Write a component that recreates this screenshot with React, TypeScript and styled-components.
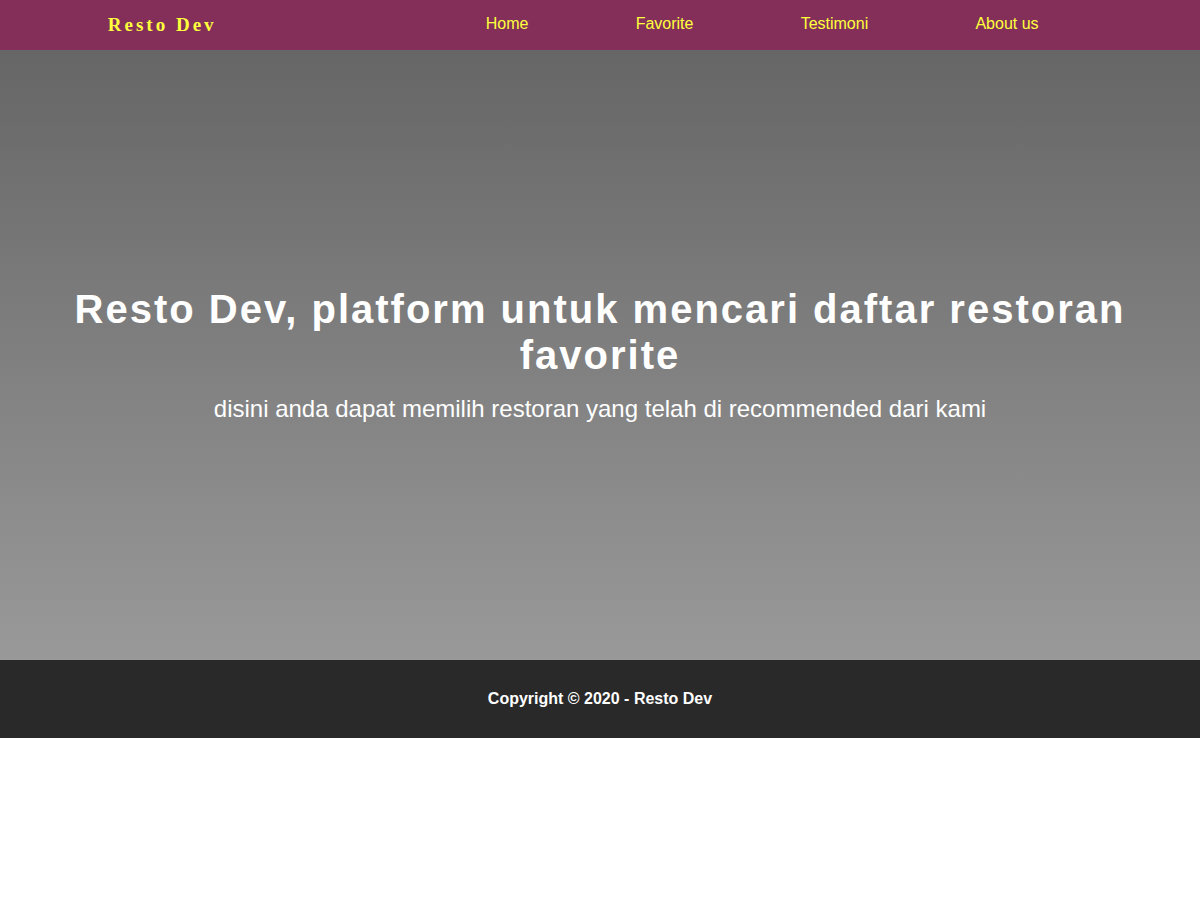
import React from "react";
import styled, { createGlobalStyle } from "styled-components";

const GlobalStyle = createGlobalStyle`
  * { box-sizing: border-box; margin: 0; padding: 0; }
  body { background: #fff; font-family: "Liberation Sans", Arial, sans-serif; }
`;

const NavBar = styled.nav`
  display: flex;
  justify-content: space-around;
  align-items: center;
  height: 50px;
  background: #832f5a;
`;

const Logo = styled.h1`
  color: #ffff3c;
  font-family: "Liberation Serif", "Times New Roman", serif;
  font-size: 19px;
  font-weight: bold;
  letter-spacing: 3px;
  line-height: 24px;
`;

const NavLinks = styled.ul`
  display: flex;
  justify-content: space-around;
  width: 55%;
  list-style: none;
`;

const NavLink = styled.a`
  display: block;
  color: #ffff3c;
  font-size: 16px;
  line-height: 18px;
  padding-bottom: 2px;
  text-decoration: none;
`;

const Hero = styled.header`
  display: flex;
  flex-direction: column;
  align-items: center;
  justify-content: center;
  min-height: 610px;
  color: #fff;
  text-align: center;
  background: linear-gradient(#666, #999);
`;

const HeroTitle = styled.h2`
  font-size: 40px;
  line-height: 46px;
  letter-spacing: 2px;
  padding: 0 64px;
`;

const HeroText = styled.p`
  margin-top: 16px;
  font-size: 24px;
  line-height: 30px;
`;

const Footer = styled.footer`
  padding: 30px 16px;
  background: #292929;
  color: #fff;
  font-size: 16px;
  font-weight: bold;
  line-height: 18px;
  text-align: center;
`;

const links = [
  { label: "Home", href: "#home" },
  { label: "Favorite", href: "#favorite" },
  { label: "Testimoni", href: "#testimoni" },
  { label: "About us", href: "#about" },
];

export default function App() {
  return (
    <>
      <GlobalStyle />
      <NavBar>
        <Logo>Resto Dev</Logo>
        <NavLinks>
          {links.map((link) => (
            <li key={link.href}>
              <NavLink href={link.href}>{link.label}</NavLink>
            </li>
          ))}
        </NavLinks>
      </NavBar>
      <Hero>
        <HeroTitle>Resto Dev, platform untuk mencari daftar restoran favorite</HeroTitle>
        <HeroText>disini anda dapat memilih restoran yang telah di recommended dari kami</HeroText>
      </Hero>
      <Footer>
        <p>Copyright © 2020 - Resto Dev</p>
      </Footer>
    </>
  );
}
